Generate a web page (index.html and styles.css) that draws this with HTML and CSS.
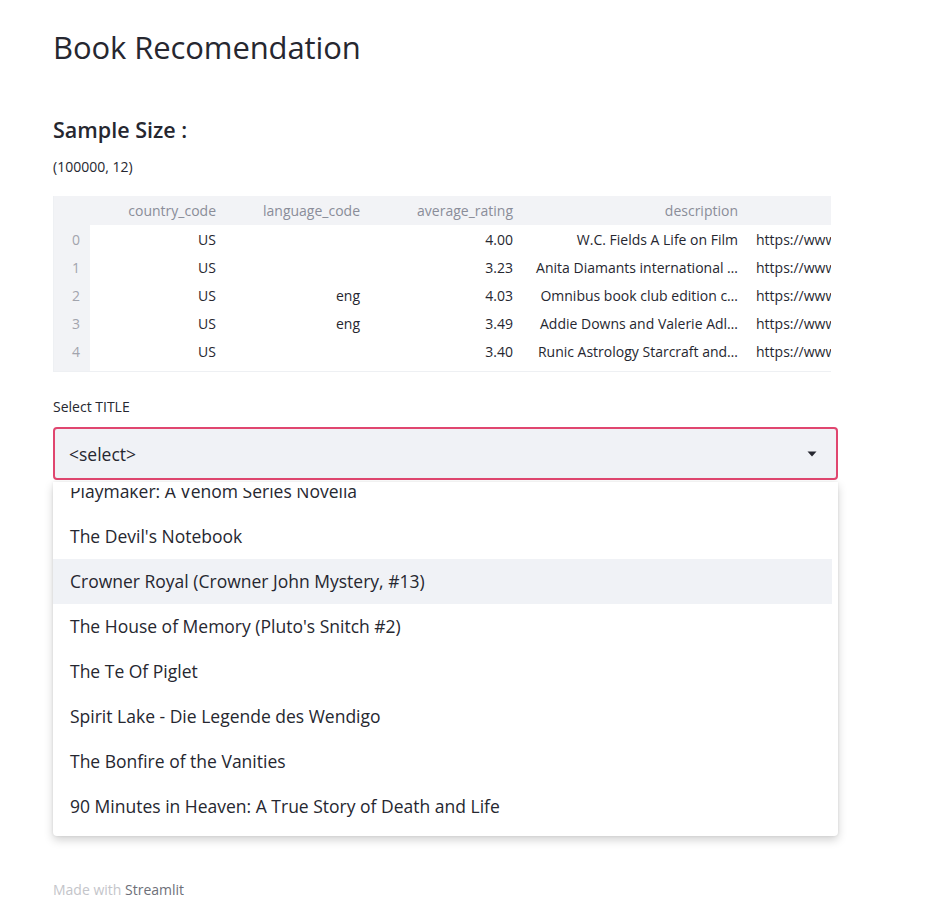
FILE: index.html
```html
<!DOCTYPE html>
<html>
<head>
<meta charset="utf-8">
<link rel="stylesheet" href="styles.css">
</head>
<body>
<main class="main">
  <h1 class="title">Book Recomendation</h1>
  <h3 class="subtitle">Sample Size :</h3>
  <p class="shape">(100000, 12)</p>
  <div class="frame">
    <table class="df">
      <colgroup>
        <col class="c-idx"><col class="c-cc"><col class="c-lc"><col class="c-ar"><col class="c-desc"><col class="c-url">
      </colgroup>
      <thead>
        <tr><th class="idx"></th><th>country_code</th><th>language_code</th><th>average_rating</th><th>description</th><th></th></tr>
      </thead>
      <tbody>
        <tr><td class="idx">0</td><td>US</td><td></td><td>4.00</td><td>W.C. Fields A Life on Film</td><td class="url">https://www.goodreads.com</td></tr>
        <tr><td class="idx">1</td><td>US</td><td></td><td>3.23</td><td>Anita Diamants international …</td><td class="url">https://www.goodreads.com</td></tr>
        <tr><td class="idx">2</td><td>US</td><td>eng</td><td>4.03</td><td>Omnibus book club edition c…</td><td class="url">https://www.goodreads.com</td></tr>
        <tr><td class="idx">3</td><td>US</td><td>eng</td><td>3.49</td><td>Addie Downs and Valerie Adl…</td><td class="url">https://www.goodreads.com</td></tr>
        <tr><td class="idx">4</td><td>US</td><td></td><td>3.40</td><td>Runic Astrology Starcraft and…</td><td class="url">https://www.goodreads.com</td></tr>
      </tbody>
    </table>
  </div>
  <div class="field">
    <label class="label">Select TITLE</label>
    <div class="select-wrap">
      <div class="select">
        <span class="value">&lt;select&gt;</span>
        <svg class="caret" width="10" height="6" viewBox="0 0 10 6"><path d="M0.5 0.5h9L5 5.5z" fill="#262730"/></svg>
      </div>
      <div class="menu">
        <div class="scroller">
          <ul class="options">
            <li class="opt first">Playmaker: A Venom Series Novella</li>
            <li class="opt">The Devil's Notebook</li>
            <li class="opt active">Crowner Royal (Crowner John Mystery, #13)</li>
            <li class="opt">The House of Memory (Pluto's Snitch #2)</li>
            <li class="opt">The Te Of Piglet</li>
            <li class="opt">Spirit Lake - Die Legende des Wendigo</li>
            <li class="opt">The Bonfire of the Vanities</li>
            <li class="opt">90 Minutes in Heaven: A True Story of Death and Life</li>
          </ul>
        </div>
      </div>
    </div>
  </div>
</main>
<footer class="footer">Made with <span class="brand">Streamlit</span></footer>
</body>
</html>
```

FILE: styles.css
```css
* { box-sizing: border-box; }
html, body { margin: 0; padding: 0; background: #fff; }
body {
  font-family: "Open Sans", "Noto Sans", sans-serif;
  color: #262730;
  width: 936px;
  height: 902px;
  overflow: hidden;
  position: relative;
}
.main {
  padding: 22px 0 0 53px;
  width: 838px;
}
.title {
  margin: 0;
  font-size: 31px;
  font-weight: 400;
  line-height: 50px;
  letter-spacing: -0.1px;
}
.subtitle {
  margin: 44px 0 0;
  font-size: 21.5px;
  font-weight: 600;
  line-height: 28px;
}
.shape {
  margin: 14px 0 0;
  font-size: 14px;
  line-height: 18px;
}
.frame {
  margin-top: 20px;
  width: 778px;
  overflow: hidden;
  padding-bottom: 6px;
  background: linear-gradient(to right, #f2f3f6 36px, #fff 36px);
  border-left: 1px solid #eef0f3;
  border-bottom: 1px solid #eef0f3;
}
.df {
  border-collapse: collapse;
  table-layout: fixed;
  width: 900px;
  font-size: 14px;
}
.c-idx { width: 36px; }
.c-cc { width: 136px; }
.c-lc { width: 144px; }
.c-ar { width: 153px; }
.c-desc { width: 225px; }
.c-url { width: 206px; }
.df th, .df td {
  padding: 0 10px;
  text-align: right;
  white-space: nowrap;
  overflow: hidden;
}
.df th {
  height: 29px;
  background: #f2f3f6;
  color: #8a8d99;
  font-weight: 400;
}
.df td {
  height: 28px;
  color: #262730;
}
.df td.idx {
  background: #f2f3f6;
  color: #a2a4ad;
  text-align: right;
  padding: 0 10px 0 0;
}
.df td.url { text-align: left; padding-left: 8px; }
.field {
  margin-top: 26px;
}
.label {
  display: block;
  font-size: 14px;
  line-height: 18px;
  margin-bottom: 11px;
}
.select-wrap {
  position: relative;
  width: 785px;
}
.select {
  height: 53px;
  border: 2px solid #e0466f;
  border-radius: 4px;
  background: #f0f2f6;
  display: flex;
  align-items: center;
  justify-content: space-between;
  padding: 0 19px 0 14px;
  font-size: 17.5px;
}
.caret { display: block; }
.menu {
  position: absolute;
  left: 0;
  top: 55px;
  width: 785px;
  height: 354px;
  padding-top: 6px;
  background: #fff;
  border-radius: 0 0 4px 4px;
  box-shadow: 0 4px 10px rgba(0,0,0,0.18), 0 0 3px rgba(0,0,0,0.08);
  z-index: 5;
}
.scroller {
  height: 348px;
  overflow: hidden;
}
.options {
  list-style: none;
  margin: 0;
  padding: 0;
  width: 779px;
}
.opt {
  height: 45px;
  line-height: 45px;
  padding-left: 17px;
  font-size: 17.5px;
  color: #262730;
  white-space: nowrap;
}
.opt.first { margin-top: -19px; }
.opt.active { background: #f0f2f6; }
.footer {
  position: absolute;
  left: 53px;
  top: 880px;
  font-size: 14px;
  color: #c4c5ca;
}
.brand { color: #6e7079; }
```
